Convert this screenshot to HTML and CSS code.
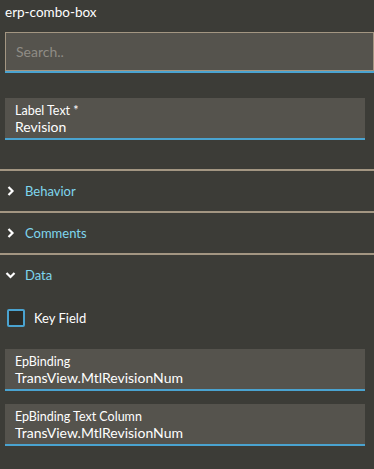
FILE: index.html
```html
<!DOCTYPE html>
<html lang="en">
<head>
    <meta charset="UTF-8">
    <meta name="viewport" content="width=device-width, initial-scale=1.0">
    <title>erp-combo-box</title>
    <link rel="stylesheet" href="styles.css">
</head>
<body>
    <div class="title">erp-combo-box</div>
    <div class="search">
        <input class="search-input" type="text" placeholder="Search..">
    </div>
    <div class="field field-top">
        <div class="field-label">Label Text *</div>
        <div class="field-value">Revision</div>
    </div>
    <div class="section">
        <div class="section-head">
            <svg class="chevron" width="12" height="12" viewBox="0 0 12 12"><path d="M3.5 2 L7.5 6 L3.5 10" fill="none" stroke="#fff" stroke-width="2.2"/></svg>
            <span>Behavior</span>
        </div>
    </div>
    <div class="section">
        <div class="section-head">
            <svg class="chevron" width="12" height="12" viewBox="0 0 12 12"><path d="M3.5 2 L7.5 6 L3.5 10" fill="none" stroke="#fff" stroke-width="2.2"/></svg>
            <span>Comments</span>
        </div>
    </div>
    <div class="section">
        <div class="section-head">
            <svg class="chevron" width="12" height="12" viewBox="0 0 12 12"><path d="M1.5 4 L5.5 8 L9.5 4" fill="none" stroke="#fff" stroke-width="2.2"/></svg>
            <span>Data</span>
        </div>
        <div class="section-body">
            <label class="check">
                <span class="check-box"></span>
                <span>Key Field</span>
            </label>
            <div class="field">
                <div class="field-label">EpBinding</div>
                <div class="field-value">TransView.MtlRevisionNum</div>
            </div>
            <div class="field">
                <div class="field-label">EpBinding Text Column</div>
                <div class="field-value">TransView.MtlRevisionNum</div>
            </div>
        </div>
    </div>
</body>
</html>
```

FILE: styles.css
```css
body {
    margin: 0;
    background-color: #3c3c37;
    font-family: Lato, "Open Sans", sans-serif;
    color: #fff;
}
.title {
    height: 25px;
    line-height: 25px;
    padding-left: 5px;
    font-size: 13.5px;
}
.search {
    margin: 7px 0 0 5px;
}
.search-input {
    box-sizing: border-box;
    display: block;
    width: 100%;
    height: 39px;
    margin: 0;
    padding: 0 10px;
    background: #55534d;
    border: 1px solid #a39682;
    box-shadow: 0 2px 0 #4aa3d0;
    color: #fff;
    font-family: inherit;
    font-size: 14px;
    outline: none;
}
.search-input::placeholder {
    color: #8f8c85;
}
.field {
    margin: 0 9px 0 5px;
    height: 42px;
    padding: 5px 10px 0;
    box-sizing: border-box;
    background: #55534d;
    border-bottom: 2px solid #4aa3d0;
}
.field-top {
    margin-top: 27px;
    margin-bottom: 29px;
}
.field-label {
    font-size: 12.5px;
    line-height: 15px;
}
.field-value {
    font-size: 14px;
    line-height: 17px;
}
.section {
    border-top: 2px solid #a39682;
}
.section-head {
    display: flex;
    align-items: center;
    height: 40px;
    padding-left: 5px;
    color: #7fd6ee;
    font-size: 13px;
}
.chevron {
    margin-right: 8px;
}
.section-body {
    padding-bottom: 20px;
}
.check {
    display: flex;
    align-items: center;
    height: 18px;
    margin: 14px 0 22px 7px;
    font-size: 13px;
}
.check-box {
    box-sizing: border-box;
    width: 18px;
    height: 18px;
    margin-right: 9px;
    background: #2a2a26;
    border: 2px solid #4aa3d0;
    border-radius: 2px;
}
.section-body .field + .field {
    margin-top: 13px;
}
```
